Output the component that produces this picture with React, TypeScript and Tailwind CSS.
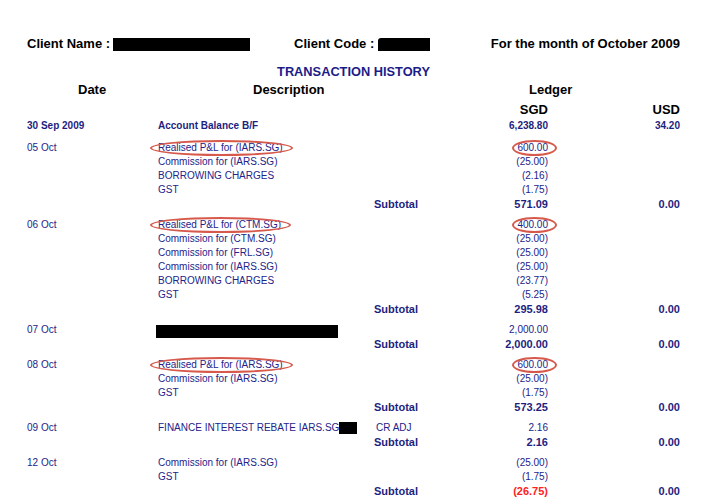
import type { ReactNode } from 'react';

type Line = {
  desc: ReactNode;
  extra?: string;
  sgd?: string;
  mark?: boolean;
};

type Group = {
  date: string;
  lines: Line[];
  subtotal: string;
  negative?: boolean;
};

const groups: Group[] = [
  {
    date: '05 Oct',
    lines: [
      { desc: 'Realised P&L for (IARS.SG)', sgd: '600.00', mark: true },
      { desc: 'Commission for (IARS.SG)', sgd: '(25.00)' },
      { desc: 'BORROWING CHARGES', sgd: '(2.16)' },
      { desc: 'GST', sgd: '(1.75)' },
    ],
    subtotal: '571.09',
  },
  {
    date: '06 Oct',
    lines: [
      { desc: 'Realised P&L for (CTM.SG)', sgd: '400.00', mark: true },
      { desc: 'Commission for (CTM.SG)', sgd: '(25.00)' },
      { desc: 'Commission for (FRL.SG)', sgd: '(25.00)' },
      { desc: 'Commission for (IARS.SG)', sgd: '(25.00)' },
      { desc: 'BORROWING CHARGES', sgd: '(23.77)' },
      { desc: 'GST', sgd: '(5.25)' },
    ],
    subtotal: '295.98',
  },
  {
    date: '07 Oct',
    lines: [
      {
        desc: <span className="-ml-[2px] inline-block h-[13px] w-[182px] translate-y-[1px] bg-black align-middle" />,
        sgd: '2,000.00',
      },
    ],
    subtotal: '2,000.00',
  },
  {
    date: '08 Oct',
    lines: [
      { desc: 'Realised P&L for (IARS.SG)', sgd: '600.00', mark: true },
      { desc: 'Commission for (IARS.SG)', sgd: '(25.00)' },
      { desc: 'GST', sgd: '(1.75)' },
    ],
    subtotal: '573.25',
  },
  {
    date: '09 Oct',
    lines: [
      {
        desc: (
          <span className="whitespace-nowrap">
            FINANCE INTEREST REBATE IARS.SG
            <span className="inline-block h-[12px] w-[18px] bg-black align-middle" />
          </span>
        ),
        extra: 'CR ADJ',
        sgd: '2.16',
      },
    ],
    subtotal: '2.16',
  },
  {
    date: '12 Oct',
    lines: [
      { desc: 'Commission for (IARS.SG)', sgd: '(25.00)' },
      { desc: 'GST', sgd: '(1.75)' },
    ],
    subtotal: '(26.75)',
    negative: true,
  },
];

const cols = 'grid grid-cols-[131px_216px_100px_74px_132px]';

function Circled({ children, wide }: { children: ReactNode; wide?: boolean }) {
  return (
    <span className="relative inline-block">
      {children}
      <span
        className={
          wide
            ? 'absolute -left-[8px] -right-[10px] -top-[1px] -bottom-[1px] rounded-[50%] border-2 border-[#d6594c]'
            : 'absolute -left-[5px] -right-[9px] -top-[1px] -bottom-[1px] rounded-[50%] border-2 border-[#d6594c]'
        }
      />
    </span>
  );
}

function GroupRows({ group, first }: { group: Group; first: boolean }) {
  return (
    <div className={first ? 'mt-[8px]' : 'mt-[6px]'}>
      {group.lines.map((line, i) => (
        <div key={i} className={`${cols} h-[14px] items-center text-[10px] leading-[14px] text-[#23238a]`}>
          <span>{i === 0 ? group.date : ''}</span>
          <span className="whitespace-nowrap">
            {line.mark ? <Circled wide>{line.desc}</Circled> : line.desc}
          </span>
          <span className="pl-[2px]">{line.extra}</span>
          <span className="text-right">
            {line.mark ? <Circled>{line.sgd}</Circled> : line.sgd}
          </span>
          <span />
        </div>
      ))}
      <div className={`${cols} h-[15px] items-center text-[11px] font-bold leading-[15px] text-[#1e1e80]`}>
        <span />
        <span />
        <span>Subtotal</span>
        <span className={`text-right ${group.negative ? 'text-[#ff2222]' : ''}`}>{group.subtotal}</span>
        <span className="text-right">0.00</span>
      </div>
    </div>
  );
}

export default function App() {
  return (
    <div className="h-[502px] w-[705px] overflow-hidden bg-white pl-[27px] pr-[25px] pt-[34px] font-['Liberation_Sans',Arial,sans-serif]">
      <div className="flex h-[20px] items-center text-[13px] font-bold leading-[20px] text-black">
        <span>Client Name :</span>
        <span className="ml-[3px] h-[13px] w-[137px] bg-black" />
        <span className="ml-[44px]">Client Code :</span>
        <span className="ml-[4px] h-[13px] w-[52px] rounded-tl-[3px] bg-black" />
        <span className="ml-auto">For the month of October 2009</span>
      </div>

      <div className="mt-[10px] h-[16px] text-center text-[12.8px] font-bold leading-[16px] text-[#1c1c88]">
        TRANSACTION HISTORY
      </div>

      <div className={`${cols} mt-[2px] h-[16px] text-[13px] font-bold leading-[16px] text-black`}>
        <span className="pl-[51px]">Date</span>
        <span className="whitespace-nowrap pl-[95px]">Description</span>
        <span />
        <span className="col-span-2 pl-[55px]">Ledger</span>
      </div>

      <div className={`${cols} mt-[4px] h-[16px] text-[13px] font-bold leading-[16px] text-black`}>
        <span />
        <span />
        <span />
        <span className="text-right">SGD</span>
        <span className="text-right">USD</span>
      </div>

      <div className={`${cols} mt-[1px] h-[14px] items-center text-[10px] font-bold leading-[14px] text-[#1e1e80]`}>
        <span>30 Sep 2009</span>
        <span>Account Balance B/F</span>
        <span />
        <span className="text-right">6,238.80</span>
        <span className="text-right">34.20</span>
      </div>

      {groups.map((g, i) => (
        <GroupRows key={g.date} group={g} first={i === 0} />
      ))}
    </div>
  );
}
